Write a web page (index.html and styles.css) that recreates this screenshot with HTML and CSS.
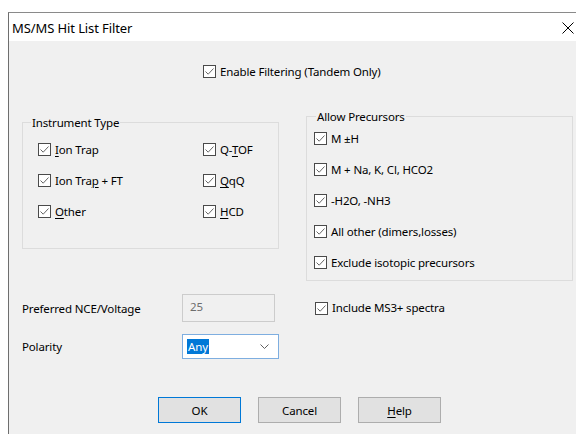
FILE: index.html
```html
<!DOCTYPE html>
<html>
<head>
<meta charset="utf-8">
<title>MS/MS Hit List Filter</title>
<link rel="stylesheet" href="styles.css">
</head>
<body>
<div class="window">
  <div class="titlebar">
    <span class="title">MS/MS Hit List Filter</span>
    <svg class="close" width="12" height="12" viewBox="0 0 12 12"><path d="M0.5 0.5 L11.5 11.5 M11.5 0.5 L0.5 11.5" stroke="#000" stroke-width="1" fill="none"/></svg>
  </div>
  <div class="client">
    <div class="enable-row">
      <label class="check"><span class="box"><svg viewBox="0 0 11 11"><path d="M1.5 5.5 L4.2 8.2 L9.5 2.5" /></svg></span>Enable Filtering (Tandem Only)</label>
    </div>

    <div class="groups">
      <div class="group instrument">
        <div class="group-title">Instrument Type</div>
        <div class="inst-grid">
          <label class="check"><span class="box"><svg viewBox="0 0 11 11"><path d="M1.5 5.5 L4.2 8.2 L9.5 2.5" /></svg></span><span><u>I</u>on Trap</span></label>
          <label class="check"><span class="box"><svg viewBox="0 0 11 11"><path d="M1.5 5.5 L4.2 8.2 L9.5 2.5" /></svg></span><span>Q-<u>T</u>OF</span></label>
          <label class="check"><span class="box"><svg viewBox="0 0 11 11"><path d="M1.5 5.5 L4.2 8.2 L9.5 2.5" /></svg></span><span>Ion Tra<u>p</u> + FT</span></label>
          <label class="check"><span class="box"><svg viewBox="0 0 11 11"><path d="M1.5 5.5 L4.2 8.2 L9.5 2.5" /></svg></span><span><u>Q</u>qQ</span></label>
          <label class="check"><span class="box"><svg viewBox="0 0 11 11"><path d="M1.5 5.5 L4.2 8.2 L9.5 2.5" /></svg></span><span><u>O</u>ther</span></label>
          <label class="check"><span class="box"><svg viewBox="0 0 11 11"><path d="M1.5 5.5 L4.2 8.2 L9.5 2.5" /></svg></span><span><u>H</u>CD</span></label>
        </div>
      </div>

      <div class="group precursors">
        <div class="group-title">Allow Precursors</div>
        <div class="prec-list">
          <label class="check"><span class="box"><svg viewBox="0 0 11 11"><path d="M1.5 5.5 L4.2 8.2 L9.5 2.5" /></svg></span>M ±H</label>
          <label class="check"><span class="box"><svg viewBox="0 0 11 11"><path d="M1.5 5.5 L4.2 8.2 L9.5 2.5" /></svg></span>M + Na, K, Cl, HCO2</label>
          <label class="check"><span class="box"><svg viewBox="0 0 11 11"><path d="M1.5 5.5 L4.2 8.2 L9.5 2.5" /></svg></span>-H2O, -NH3</label>
          <label class="check"><span class="box"><svg viewBox="0 0 11 11"><path d="M1.5 5.5 L4.2 8.2 L9.5 2.5" /></svg></span>All other (dimers,losses)</label>
          <label class="check"><span class="box"><svg viewBox="0 0 11 11"><path d="M1.5 5.5 L4.2 8.2 L9.5 2.5" /></svg></span>Exclude isotopic precursors</label>
        </div>
      </div>
    </div>

    <div class="field-row nce-row">
      <span class="field-label">Preferred NCE/Voltage</span>
      <div class="edit disabled">25</div>
      <label class="check ms3"><span class="box"><svg viewBox="0 0 11 11"><path d="M1.5 5.5 L4.2 8.2 L9.5 2.5" /></svg></span>Include MS3+ spectra</label>
    </div>

    <div class="field-row polarity-row">
      <span class="field-label">Polarity</span>
      <div class="combo">
        <span class="combo-value">Any</span>
        <svg class="chevron" width="9" height="5" viewBox="0 0 9 5"><path d="M0.5 0.5 L4.5 4.5 L8.5 0.5" fill="none" stroke="#606060" stroke-width="1"/></svg>
      </div>
    </div>

    <div class="buttons">
      <button class="btn default">OK</button>
      <button class="btn">Cancel</button>
      <button class="btn"><u>H</u>elp</button>
    </div>
  </div>
</div>
</body>
</html>
```

FILE: styles.css
```css
html, body {
  margin: 0;
  padding: 0;
  background: #ffffff;
  overflow: hidden;
}

body {
  font-family: "Noto Sans", "Open Sans", sans-serif;
  font-size: 11.5px;
  letter-spacing: -0.15px;
  color: #000;
}

.window {
  margin: 12px 0 0 8px;
  border-top: 1px solid #8a8a8a;
  border-left: 1px solid #6e6e6e;
  height: 421px;
  display: flex;
  flex-direction: column;
}

.titlebar {
  height: 28px;
  background: #ffffff;
  display: flex;
  align-items: center;
  justify-content: space-between;
  padding: 0 2px 0 3px;
  flex: none;
}

.title {
  font-size: 13px;
  letter-spacing: -0.1px;
  padding-top: 1px;
}

.close {
  display: block;
  margin-top: 1px;
}

.client {
  flex: 1;
  background: #f0f0f0;
}

/* checkbox */
.check {
  display: flex;
  align-items: center;
  height: 13px;
  white-space: nowrap;
  line-height: 16px;
}

.box {
  width: 11px;
  height: 11px;
  border: 1px solid #4a4a4a;
  background: #fff;
  flex: none;
  margin-right: 4px;
  display: block;
}

.box svg {
  display: block;
  width: 11px;
  height: 11px;
}

.box path {
  fill: none;
  stroke: #666;
  stroke-width: 1;
}

u {
  text-decoration: underline;
  text-underline-offset: 2px;
}

.enable-row {
  padding: 24px 0 0 194px;
}

/* group boxes */
.groups {
  display: flex;
  align-items: flex-start;
  margin-top: 38px;
  padding-left: 13px;
}

.group {
  border: 1px solid #dcdcdc;
  box-sizing: border-box;
}

.group-title {
  display: table;
  margin-top: -8px;
  line-height: 16px;
  background: #f0f0f0;
  padding: 0 1px;
}

.instrument {
  width: 257px;
  height: 127px;
  margin-top: 6px;
}

.instrument .group-title {
  margin-left: 8px;
}

.inst-grid {
  display: grid;
  grid-template-columns: 165px 1fr;
  row-gap: 18px;
  margin-top: 12px;
  padding-left: 15px;
}

.precursors {
  width: 267px;
  height: 165px;
  margin-left: 27px;
}

.precursors .group-title {
  margin-left: 9px;
}

.prec-list {
  display: flex;
  flex-direction: column;
  gap: 18px;
  margin-top: 7px;
  padding-left: 7px;
}

/* edit fields */
.field-row {
  display: flex;
  align-items: center;
  padding-left: 13px;
}

.field-label {
  width: 160px;
  flex: none;
}

.nce-row {
  margin-top: 13px;
  height: 28px;
}

.edit {
  width: 93px;
  height: 28px;
  box-sizing: border-box;
  border: 1px solid #cccccc;
  background: #f0f0f0;
  color: #6d6d6d;
  padding: 4px 0 0 7px;
  line-height: 16px;
  align-self: flex-start;
}

.ms3 {
  margin-left: 40px;
}

.polarity-row {
  margin-top: 12px;
  height: 25px;
}

.combo {
  width: 97px;
  height: 25px;
  box-sizing: border-box;
  border: 1px solid #7eaee0;
  background: #fff;
  display: flex;
  align-items: center;
  justify-content: space-between;
  padding: 0 9px 0 4px;
}

.combo-value {
  background: #0078d7;
  color: #fff;
  line-height: 15px;
  padding: 0 1px;
}

.chevron {
  display: block;
}

/* buttons */
.buttons {
  display: flex;
  gap: 17px;
  margin-top: 38px;
  padding-left: 149px;
}

.btn {
  width: 83px;
  height: 26px;
  box-sizing: border-box;
  border: 1px solid #adadad;
  background: #e1e1e1;
  font-family: inherit;
  font-size: 11.5px;
  letter-spacing: -0.15px;
  color: #000;
  padding: 0;
  margin: 0;
}

.btn.default {
  border: 1px solid #0078d7;
}
```
